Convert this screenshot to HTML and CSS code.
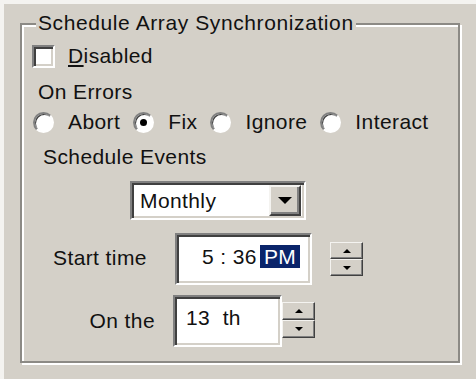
FILE: index.html
```html
<!DOCTYPE html>
<html lang="en">
<head>
    <meta charset="UTF-8">
    <title>Schedule Array Synchronization</title>
    <link rel="stylesheet" href="styles.css">
</head>
<body>

    <div class="dialog">
        <div class="group">
            <div class="group-title">Schedule Array Synchronization</div>

            <div class="row row-check">
                <span class="checkbox"></span>
                <span class="check-label"><u>D</u>isabled</span>
            </div>

            <div class="row row-errors">On Errors</div>

            <div class="row row-radios">
                <span class="radio"></span><span class="radio-label">Abort</span>
                <span class="radio checked"></span><span class="radio-label">Fix</span>
                <span class="radio"></span><span class="radio-label">Ignore</span>
                <span class="radio"></span><span class="radio-label">Interact</span>
            </div>

            <div class="row row-events">Schedule Events</div>

            <div class="row row-combo">
                <div class="combo">
                    <span class="combo-text">Monthly</span>
                    <span class="combo-btn"><span class="arrow-down big"></span></span>
                </div>
            </div>

            <div class="row row-time">
                <span class="time-label">Start time</span>
                <div class="field time-field">
                    <span class="time-value">5 : 36</span>
                    <span class="ampm">PM</span>
                </div>
                <div class="spinner time-spin">
                    <span class="spin-btn"><span class="arrow-up"></span></span>
                    <span class="spin-btn"><span class="arrow-down"></span></span>
                </div>
            </div>

            <div class="row row-day">
                <span class="day-label">On the</span>
                <div class="field day-field">
                    <span class="day-value">13&nbsp; th</span>
                </div>
                <div class="spinner day-spin">
                    <span class="spin-btn"><span class="arrow-up"></span></span>
                    <span class="spin-btn"><span class="arrow-down"></span></span>
                </div>
            </div>
        </div>
    </div>

</body>
</html>
```

FILE: styles.css
```css
* {
    margin: 0;
    padding: 0;
    box-sizing: border-box;
}

body {
    width: 476px;
    height: 379px;
    background: #d4d0c8;
    font-family: "Liberation Sans", Arial, sans-serif;
    font-size: 21px;
    letter-spacing: 0.4px;
    color: #111;
    overflow: hidden;
}

.dialog {
    height: 379px;
    border-top: 4px solid #f4f3f0;
    border-left: 4px solid #f4f3f0;
    padding: 19px 0 0 16px;
}

/* etched group box */
.group {
    position: relative;
    width: 440px;
    height: 340px;
    border: 2px solid #8c8a85;
    box-shadow: inset 2px 2px 0 #fff, 2px 2px 0 #fff;
    padding-top: 19px;
}

.group-title {
    position: absolute;
    top: -13px;
    left: 14px;
    padding: 0 2px;
    background: #d4d0c8;
    line-height: 22px;
    letter-spacing: 0.6px;
}

.row {
    display: flex;
    align-items: center;
}

.row-check {
    height: 24px;
    padding-left: 10px;
}

.checkbox {
    width: 23px;
    height: 23px;
    background: #fff;
    border-top: 2px solid #808080;
    border-left: 2px solid #808080;
    border-right: 2px solid #fff;
    border-bottom: 2px solid #fff;
    box-shadow: inset 2px 2px 0 #404040, inset -2px -2px 0 #d4d0c8;
}

.check-label {
    margin-left: 13px;
}

.row-errors {
    height: 24px;
    margin-top: 12px;
    padding-left: 16px;
}

.row-radios {
    height: 24px;
    margin-top: 6px;
    padding-left: 11px;
}

.radio {
    position: relative;
    flex-shrink: 0;
    width: 21px;
    height: 21px;
    border-radius: 50%;
    background: #fff;
    border: 2px solid;
    border-color: #808080 #fff #fff #808080;
    box-shadow: inset 1px 1px 0 #404040;
}

.radio.checked::after {
    content: "";
    position: absolute;
    top: 5px;
    left: 5px;
    width: 7px;
    height: 7px;
    border-radius: 50%;
    background: #000;
}

.radio-label {
    margin-left: 14px;
    margin-right: 13px;
}

.row-events {
    height: 24px;
    margin-top: 11px;
    padding-left: 21px;
}

.row-combo {
    height: 39px;
    margin-top: 12px;
    padding-left: 108px;
}

.combo {
    display: flex;
    align-items: center;
    justify-content: space-between;
    width: 176px;
    height: 39px;
    background: #fff;
    border: 2px solid;
    border-color: #808080 #fff #fff #808080;
    box-shadow: inset 2px 2px 0 #404040, inset -2px -2px 0 #d4d0c8;
    padding: 0 3px 0 8px;
}

.combo-btn {
    display: flex;
    align-items: center;
    justify-content: center;
    width: 32px;
    height: 31px;
    background: #d4d0c8;
    border: 2px solid;
    border-color: #f4f3f0 #404040 #404040 #f4f3f0;
    box-shadow: inset -2px -2px 0 #808080;
}

.arrow-down {
    width: 0;
    height: 0;
    border-left: 4px solid transparent;
    border-right: 4px solid transparent;
    border-top: 4px solid #000;
}

.arrow-down.big {
    border-left-width: 7px;
    border-right-width: 7px;
    border-top-width: 7px;
}

.arrow-up {
    width: 0;
    height: 0;
    border-left: 4px solid transparent;
    border-right: 4px solid transparent;
    border-bottom: 4px solid #000;
}

.row-time {
    height: 52px;
    margin-top: 13px;
    padding-left: 31px;
}

.time-label {
    width: 122px;
    align-self: flex-start;
    margin-top: 13px;
}

.field {
    display: flex;
    align-items: flex-start;
    height: 52px;
    background: #fff;
    border: 2px solid;
    border-color: #808080 #fff #fff #808080;
    box-shadow: inset 2px 2px 0 #404040, inset -2px -2px 0 #d4d0c8;
}

.time-field {
    width: 137px;
    padding: 10px 0 0 25px;
}

.time-value {
    line-height: 24px;
}

.ampm {
    margin-left: 3px;
    padding: 0 4px;
    background: #0a246a;
    color: #fff;
    line-height: 23px;
}

.spinner {
    display: flex;
    flex-direction: column;
}

.spin-btn {
    display: flex;
    align-items: center;
    justify-content: center;
    width: 33px;
    height: 17px;
    background: #d4d0c8;
    border: 1px solid;
    border-color: #f4f3f0 #404040 #404040 #f4f3f0;
    box-shadow: inset -1px -1px 0 #808080;
}

.time-spin {
    margin-left: 18px;
    align-self: flex-start;
    margin-top: 9px;
}

.row-day {
    height: 52px;
    margin-top: 10px;
}

.day-label {
    width: 133px;
    text-align: right;
    align-self: flex-start;
    margin-top: 14px;
}

.day-field {
    width: 109px;
    margin-left: 18px;
    padding: 9px 0 0 11px;
}

.day-value {
    line-height: 24px;
}

.day-spin {
    margin-top: 7px;
    align-self: flex-start;
}

.day-spin .spin-btn {
    height: 18px;
}
```
